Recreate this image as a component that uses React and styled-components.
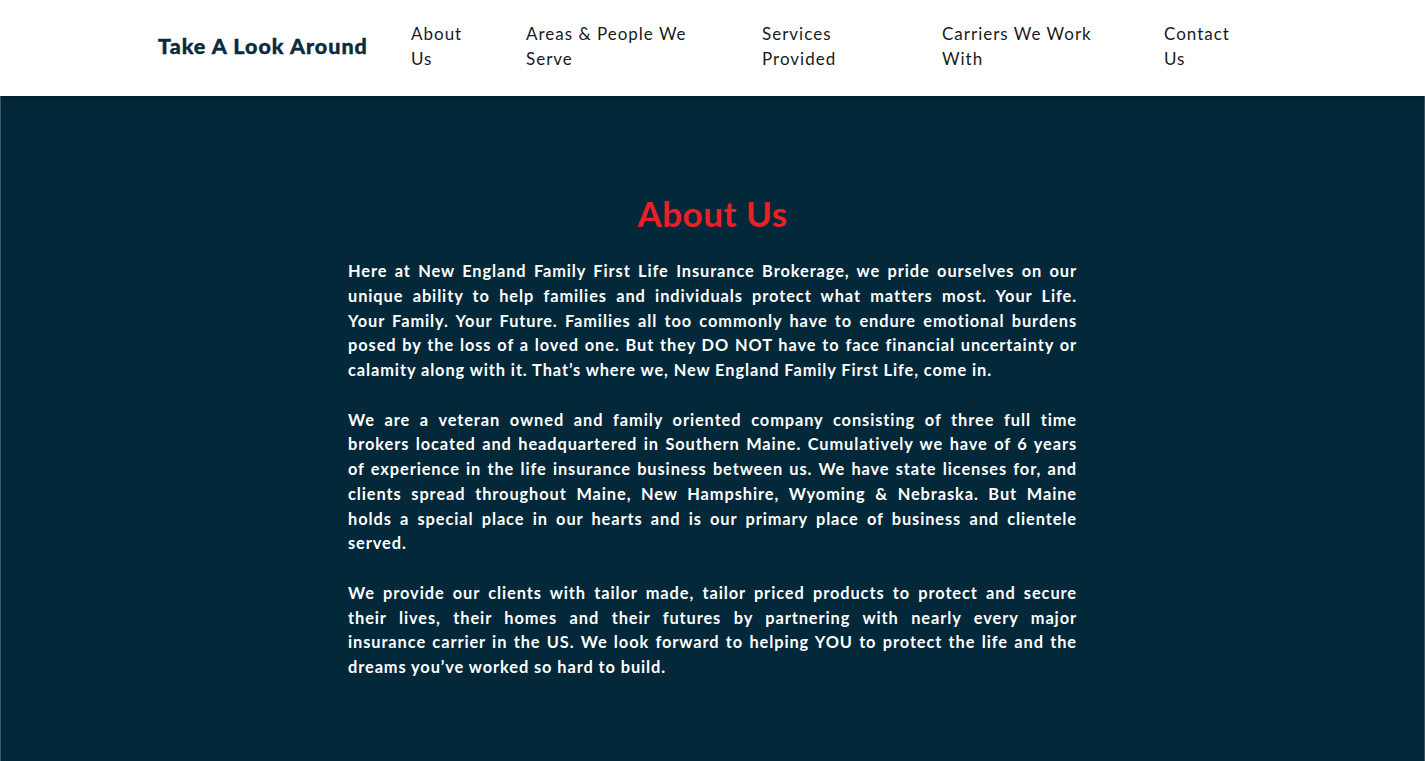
import React from "react";
import styled, { createGlobalStyle } from "styled-components";

const COLORS = {
  navy: "#022839",
  ink: "#0b2b3b",
  red: "#ea2027",
  white: "#ffffff",
  text: "#1a1a1a",
};

const NAV_ITEMS = [
  { label: "About Us", width: 115, inner: 74 },
  { label: "Areas & People We Serve", width: 236, inner: 180 },
  { label: "Services Provided", width: 180, inner: 120 },
  { label: "Carriers We Work With", width: 222, inner: 160 },
  { label: "Contact Us", width: 100, inner: 70 },
];

// lines are kept as in the original layout so the justified wraps match
const PARAGRAPHS = [
  [
    "Here at New England Family First Life Insurance Brokerage, we pride ourselves on our",
    "unique ability to help families and individuals protect what matters most. Your Life.",
    "Your Family. Your Future. Families all too commonly have to endure emotional burdens",
    "posed by the loss of a loved one. But they DO NOT have to face financial uncertainty or",
    "calamity along with it. That’s where we, New England Family First Life, come in.",
  ],
  [
    "We are a veteran owned and family oriented company consisting of three full time",
    "brokers located and headquartered in Southern Maine. Cumulatively we have of 6 years",
    "of experience in the life insurance business between us. We have state licenses for, and",
    "clients spread throughout Maine, New Hampshire, Wyoming & Nebraska. But Maine",
    "holds a special place in our hearts and is our primary place of business and clientele",
    "served.",
  ],
  [
    "We provide our clients with tailor made, tailor priced products to protect and secure",
    "their lives, their homes and their futures by partnering with nearly every major",
    "insurance carrier in the US. We look forward to helping YOU to protect the life and the",
    "dreams you’ve worked so hard to build.",
  ],
];

const App = () => {
  return (
    <>
      <GlobalStyle />
      <Page>
        <Header>
          <Logo>Take A Look Around</Logo>
          <Nav>
            {NAV_ITEMS.map((item) => (
              <NavItem key={item.label} $width={item.width}>
                <NavLink href="#" $inner={item.inner}>
                  {item.label}
                </NavLink>
              </NavItem>
            ))}
          </Nav>
        </Header>
        <Main>
          <Content>
            <Title>About Us</Title>
            {PARAGRAPHS.map((lines, i) => (
              <Paragraph key={i}>
                {lines.map((line, j) => (
                  <Line key={j} $last={j === lines.length - 1}>
                    {line}
                  </Line>
                ))}
              </Paragraph>
            ))}
          </Content>
        </Main>
      </Page>
    </>
  );
};

const GlobalStyle = createGlobalStyle`
  html, body, #root {
    margin: 0;
    padding: 0;
    height: 100%;
  }
  body {
    font-family: "Lato", "Noto Sans", sans-serif;
    background: ${COLORS.white};
  }
`;

const Page = styled.div`
  display: flex;
  flex-direction: column;
  min-height: 100vh;
`;

const Header = styled.header`
  position: relative;
  z-index: 1;
  display: flex;
  align-items: center;
  box-sizing: border-box;
  height: 96px;
  padding: 0 0 5px 158px;
  background: ${COLORS.white};
  box-shadow: 0 2px 8px rgba(0, 0, 0, 0.25);
`;

const Logo = styled.div`
  width: 253px;
  flex-shrink: 0;
  font-family: "Lato", sans-serif;
  font-weight: 900;
  font-size: 21.5px;
  letter-spacing: 1px;
  color: ${COLORS.ink};
  white-space: nowrap;
  -webkit-text-stroke: 0.4px ${COLORS.ink};
`;

const Nav = styled.nav`
  display: flex;
  align-items: center;
`;

const NavItem = styled.div`
  width: ${(p) => p.$width}px;
  flex-shrink: 0;
`;

const NavLink = styled.a`
  display: block;
  max-width: ${(p) => p.$inner}px;
  font-family: "Lato", sans-serif;
  font-size: 17px;
  line-height: 25px;
  letter-spacing: 1px;
  color: ${COLORS.text};
  text-decoration: none;
`;

const Main = styled.main`
  flex: 1;
  background: ${COLORS.navy};
  border-left: 1px solid #3d5664;
  border-right: 1px solid #3d5664;
  padding: 96px 0 80px;
`;

const Content = styled.section`
  width: 729px;
  margin: 0 auto;
`;

const Title = styled.h1`
  margin: 0 0 25px;
  text-align: center;
  font-family: "Lato", sans-serif;
  font-weight: 700;
  font-size: 35px;
  letter-spacing: 0.5px;
  color: ${COLORS.red};
`;

const Paragraph = styled.p`
  margin: 0 0 24.75px;
  font-family: "Lato", sans-serif;
  font-weight: 700;
  font-size: 16.4px;
  line-height: 24.75px;
  letter-spacing: 0.9px;
  color: ${COLORS.white};
`;

const Line = styled.span`
  display: block;
  white-space: nowrap;
  text-align: ${(p) => (p.$last ? "left" : "justify")};
  text-align-last: ${(p) => (p.$last ? "left" : "justify")};
`;

export default App;
